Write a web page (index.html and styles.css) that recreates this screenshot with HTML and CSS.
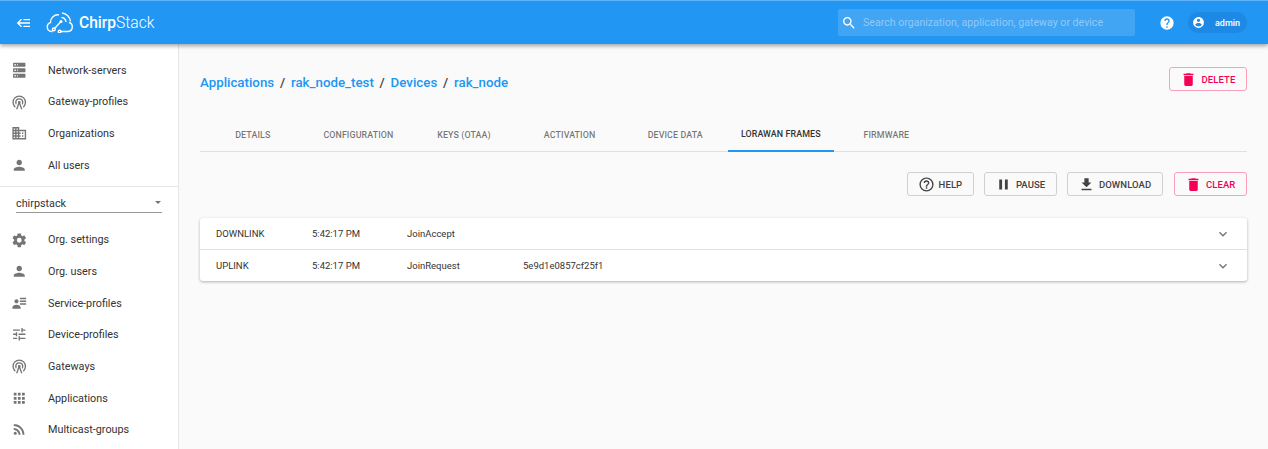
FILE: index.html
```html
<!DOCTYPE html>
<html lang="en">
<head>
  <meta charset="UTF-8">
  <meta name="viewport" content="width=device-width, initial-scale=1.0">
  <title>ChirpStack</title>
  <link rel="stylesheet" href="styles.css">
</head>
<body>
  <header class="topbar">
    <svg class="menu-icon" viewBox="0 0 24 24"><path d="M5,13L9,17L7.6,18.42L1.18,12L7.6,5.58L9,7L5,11H21V13H5M21,6V8H11V6H21M21,16V18H11V16H21Z"/></svg>
    <div class="logo">
      <svg class="logo-mark" viewBox="0 0 28 22">
        <path class="logo-line" d="M6.5 20.5H5.5A4.5 4.5 0 0 1 4.5 11.7A7.5 7.5 0 0 1 13 3.8"/>
        <path class="logo-line" d="M23 11.5a4.6 4.6 0 0 1-1 9H15"/>
        <path class="logo-line" d="M8.5 17.5L14.5 11"/>
        <circle class="logo-line" cx="7.8" cy="18.4" r="1.4"/>
        <circle class="logo-line" cx="13.6" cy="20.5" r="1.3"/>
        <circle cx="15" cy="10.5" r="1.5" fill="#fff"/>
        <path class="logo-line" d="M15.5 6.5a5 5 0 0 1 4.5 4.5M16 2a9.5 9.5 0 0 1 8.5 8.5"/>
      </svg>
      <span class="logo-text"><b>Chirp</b>Stack</span>
    </div>
    <div class="search">
      <svg class="search-icon" viewBox="0 0 24 24"><path d="M15.5 14h-.79l-.28-.27C15.41 12.59 16 11.11 16 9.5 16 5.91 13.09 3 9.5 3S3 5.91 3 9.5 5.91 16 9.5 16c1.61 0 3.09-.59 4.23-1.57l.27.28v.79l5 4.99L20.49 19l-4.99-5zm-6 0C7.01 14 5 11.99 5 9.5S7.01 5 9.5 5 14 7.01 14 9.5 11.99 14 9.5 14z"/></svg>
      <span>Search organization, application, gateway or device</span>
    </div>
    <svg class="top-help" viewBox="0 0 24 24"><path d="M15.07,11.25L14.17,12.17C13.45,12.89 13,13.5 13,15H11V14.5C11,13.39 11.45,12.39 12.17,11.67L13.41,10.41C13.78,10.05 14,9.55 14,9C14,7.89 13.1,7 12,7A2,2 0 0,0 10,9H8A4,4 0 0,1 12,5A4,4 0 0,1 16,9C16,9.88 15.64,10.67 15.07,11.25M13,19H11V17H13M12,2A10,10 0 0,0 2,12A10,10 0 0,0 12,22A10,10 0 0,0 22,12C22,6.47 17.5,2 12,2Z"/></svg>
    <div class="user-pill">
      <svg viewBox="0 0 24 24"><path d="M12,19.2C9.5,19.2 7.29,17.92 6,16C6.03,14 10,12.9 12,12.9C14,12.9 17.97,14 18,16C16.71,17.92 14.5,19.2 12,19.2M12,5A3,3 0 0,1 15,8A3,3 0 0,1 12,11A3,3 0 0,1 9,8A3,3 0 0,1 12,5M12,2A10,10 0 0,0 2,12A10,10 0 0,0 12,22A10,10 0 0,0 22,12C22,6.47 17.5,2 12,2Z"/></svg>
      <span>admin</span>
    </div>
  </header>

  <div class="layout">
    <nav class="sidebar">
      <ul class="nav-list">
        <li><svg viewBox="0 0 24 24"><path d="M4,1H20A1,1 0 0,1 21,2V6A1,1 0 0,1 20,7H4A1,1 0 0,1 3,6V2A1,1 0 0,1 4,1M4,9H20A1,1 0 0,1 21,10V14A1,1 0 0,1 20,15H4A1,1 0 0,1 3,14V10A1,1 0 0,1 4,9M4,17H20A1,1 0 0,1 21,18V22A1,1 0 0,1 20,23H4A1,1 0 0,1 3,22V18A1,1 0 0,1 4,17M9,5H10V3H9V5M9,13H10V11H9V13M9,21H10V19H9V21M5,3V5H7V3H5M5,11V13H7V11H5M5,19V21H7V19H5Z"/></svg>Network-servers</li>
        <li><svg viewBox="0 0 24 24"><path d="M12,10A2,2 0 0,1 14,12C14,12.5 13.82,12.94 13.53,13.29L16.7,22H14.57L12,14.93L9.43,22H7.3L10.47,13.29C10.18,12.94 10,12.5 10,12A2,2 0 0,1 12,10M12,8A4,4 0 0,0 8,12C8,12.5 8.1,13 8.28,13.46L7.4,15.86C6.53,14.81 6,13.47 6,12A6,6 0 0,1 12,6A6,6 0 0,1 18,12C18,13.47 17.47,14.81 16.6,15.86L15.72,13.46C15.9,13 16,12.5 16,12A4,4 0 0,0 12,8M12,4A8,8 0 0,0 4,12C4,14.36 5,16.5 6.64,17.94L5.92,19.94C3.54,18.11 2,15.23 2,12A10,10 0 0,1 12,2A10,10 0 0,1 22,12C22,15.23 20.46,18.11 18.08,19.94L17.36,17.94C19,16.5 20,14.36 20,12A8,8 0 0,0 12,4Z"/></svg>Gateway-profiles</li>
        <li><svg viewBox="0 0 24 24"><path d="M12 7V3H2v18h20V7H12zM6 19H4v-2h2v2zm0-4H4v-2h2v2zm0-4H4V9h2v2zm0-4H4V5h2v2zm4 12H8v-2h2v2zm0-4H8v-2h2v2zm0-4H8V9h2v2zm0-4H8V5h2v2zm10 12h-8v-2h2v-2h-2v-2h2v-2h-2V9h8v10zm-2-8h-2v2h2v-2zm0 4h-2v2h2v-2z"/></svg>Organizations</li>
        <li><svg viewBox="0 0 24 24"><path d="M12 12c2.21 0 4-1.79 4-4s-1.79-4-4-4-4 1.79-4 4 1.79 4 4 4zm0 2c-2.67 0-8 1.34-8 4v2h16v-2c0-2.66-5.33-4-8-4z"/></svg>All users</li>
      </ul>
      <div class="org-select">
        <span>chirpstack</span>
        <i class="select-arrow"></i>
      </div>
      <ul class="nav-list">
        <li><svg viewBox="0 0 24 24"><path d="M12,15.5A3.5,3.5 0 0,1 8.5,12A3.5,3.5 0 0,1 12,8.5A3.5,3.5 0 0,1 15.5,12A3.5,3.5 0 0,1 12,15.5M19.43,12.97C19.47,12.65 19.5,12.33 19.5,12C19.5,11.67 19.47,11.34 19.43,11L21.54,9.37C21.73,9.22 21.78,8.95 21.66,8.73L19.66,5.27C19.54,5.05 19.27,4.96 19.05,5.05L16.56,6.05C16.04,5.66 15.5,5.32 14.87,5.07L14.5,2.42C14.46,2.18 14.25,2 14,2H10C9.75,2 9.54,2.18 9.5,2.42L9.13,5.07C8.5,5.32 7.96,5.66 7.44,6.05L4.95,5.05C4.73,4.96 4.46,5.05 4.34,5.27L2.34,8.73C2.21,8.95 2.27,9.22 2.46,9.37L4.57,11C4.53,11.34 4.5,11.67 4.5,12C4.5,12.33 4.53,12.65 4.57,12.97L2.46,14.63C2.27,14.78 2.21,15.05 2.34,15.27L4.34,18.73C4.46,18.95 4.73,19.03 4.95,18.95L7.44,17.94C7.96,18.34 8.5,18.68 9.13,18.93L9.5,21.58C9.54,21.82 9.75,22 10,22H14C14.25,22 14.46,21.82 14.5,21.58L14.87,18.93C15.5,18.67 16.04,18.34 16.56,17.94L19.05,18.95C19.27,19.03 19.54,18.95 19.66,18.73L21.66,15.27C21.78,15.05 21.73,14.78 21.54,14.63L19.43,12.97Z"/></svg>Org. settings</li>
        <li><svg viewBox="0 0 24 24"><path d="M12 12c2.21 0 4-1.79 4-4s-1.79-4-4-4-4 1.79-4 4 1.79 4 4 4zm0 2c-2.67 0-8 1.34-8 4v2h16v-2c0-2.66-5.33-4-8-4z"/></svg>Org. users</li>
        <li><svg viewBox="0 0 24 24"><path d="M11,9C11,10.66 9.66,12 8,12C6.34,12 5,10.66 5,9C5,7.34 6.34,6 8,6C9.66,6 11,7.34 11,9M14,20H2V18C2,15.79 4.69,14 8,14C11.31,14 14,15.79 14,18M22,12V14H13V12M22,8V10H13V8M22,4V6H13V4Z"/></svg>Service-profiles</li>
        <li><svg viewBox="0 0 24 24"><path d="M3 17v2h6v-2H3zM3 5v2h10V5H3zm10 16v-2h8v-2h-8v-2h-2v6h2zM7 9v2H3v2h4v2h2V9H7zm14 4v-2H11v2h10zm-6-4h2V7h4V5h-4V3h-2v6z"/></svg>Device-profiles</li>
        <li><svg viewBox="0 0 24 24"><path d="M12,10A2,2 0 0,1 14,12C14,12.5 13.82,12.94 13.53,13.29L16.7,22H14.57L12,14.93L9.43,22H7.3L10.47,13.29C10.18,12.94 10,12.5 10,12A2,2 0 0,1 12,10M12,8A4,4 0 0,0 8,12C8,12.5 8.1,13 8.28,13.46L7.4,15.86C6.53,14.81 6,13.47 6,12A6,6 0 0,1 12,6A6,6 0 0,1 18,12C18,13.47 17.47,14.81 16.6,15.86L15.72,13.46C15.9,13 16,12.5 16,12A4,4 0 0,0 12,8M12,4A8,8 0 0,0 4,12C4,14.36 5,16.5 6.64,17.94L5.92,19.94C3.54,18.11 2,15.23 2,12A10,10 0 0,1 12,2A10,10 0 0,1 22,12C22,15.23 20.46,18.11 18.08,19.94L17.36,17.94C19,16.5 20,14.36 20,12A8,8 0 0,0 12,4Z"/></svg>Gateways</li>
        <li><svg viewBox="0 0 24 24"><path d="M4 8h4V4H4v4zm6 12h4v-4h-4v4zm-6 0h4v-4H4v4zm0-6h4v-4H4v4zm6 0h4v-4h-4v4zm6-10v4h4V4h-4zm-6 4h4V4h-4v4zm6 6h4v-4h-4v4zm0 6h4v-4h-4v4z"/></svg>Applications</li>
        <li><svg viewBox="0 0 24 24"><circle cx="6.18" cy="17.82" r="2.18"/><path d="M4 4.44v2.83c7.03 0 12.73 5.7 12.73 12.73h2.83c0-8.59-6.97-15.56-15.56-15.56zm0 5.66v2.83c3.9 0 7.07 3.17 7.07 7.07h2.83c0-5.47-4.43-9.9-9.9-9.9z"/></svg>Multicast-groups</li>
      </ul>
    </nav>

    <main class="content">
      <div class="title-row">
        <div class="breadcrumb">
          <a>Applications</a><span>/</span><a>rak_node_test</a><span>/</span><a>Devices</a><span>/</span><a>rak_node</a>
        </div>
        <button class="btn btn-danger">
          <svg viewBox="0 0 24 24"><path d="M19,4H15.5L14.5,3H9.5L8.5,4H5V6H19M6,19A2,2 0 0,0 8,21H16A2,2 0 0,0 18,19V7H6V19Z"/></svg>Delete
        </button>
      </div>

      <div class="tabs">
        <div class="tab">Details</div>
        <div class="tab">Configuration</div>
        <div class="tab">Keys (OTAA)</div>
        <div class="tab">Activation</div>
        <div class="tab">Device data</div>
        <div class="tab active">LoRaWAN frames</div>
        <div class="tab">Firmware</div>
      </div>

      <div class="toolbar">
        <button class="btn">
          <svg viewBox="0 0 24 24"><path d="M11,18H13V16H11V18M12,2A10,10 0 0,0 2,12A10,10 0 0,0 12,22A10,10 0 0,0 22,12A10,10 0 0,0 12,2M12,20C7.59,20 4,16.41 4,12C4,7.59 7.59,4 12,4C16.41,4 20,7.59 20,12C20,16.41 16.41,20 12,20M12,6A4,4 0 0,0 8,10H10A2,2 0 0,1 12,8A2,2 0 0,1 14,10C14,12 11,11.75 11,15H13C13,12.75 16,12.5 16,10A4,4 0 0,0 12,6Z"/></svg>Help
        </button>
        <button class="btn">
          <svg viewBox="0 0 24 24"><path d="M14,19H18V5H14M6,19H10V5H6V19Z"/></svg>Pause
        </button>
        <button class="btn">
          <svg viewBox="0 0 24 24"><path d="M5,20H19V18H5M19,9H15V3H9V9H5L12,16L19,9Z"/></svg>Download
        </button>
        <button class="btn btn-danger btn-clear">
          <svg viewBox="0 0 24 24"><path d="M19,4H15.5L14.5,3H9.5L8.5,4H5V6H19M6,19A2,2 0 0,0 8,21H16A2,2 0 0,0 18,19V7H6V19Z"/></svg>Clear
        </button>
      </div>

      <div class="frames">
        <div class="frame-row">
          <span class="col-dir">DOWNLINK</span>
          <span class="col-time">5:42:17 PM</span>
          <span class="col-type">JoinAccept</span>
          <span class="col-eui"></span>
          <svg class="chevron" viewBox="0 0 24 24"><path d="M7.41,8.58L12,13.17L16.59,8.58L18,10L12,16L6,10L7.41,8.58Z"/></svg>
        </div>
        <div class="frame-row">
          <span class="col-dir">UPLINK</span>
          <span class="col-time">5:42:17 PM</span>
          <span class="col-type">JoinRequest</span>
          <span class="col-eui">5e9d1e0857cf25f1</span>
          <svg class="chevron" viewBox="0 0 24 24"><path d="M7.41,8.58L12,13.17L16.59,8.58L18,10L12,16L6,10L7.41,8.58Z"/></svg>
        </div>
      </div>
    </main>
  </div>
</body>
</html>
```

FILE: styles.css
```css
html, body {
  height: 100%;
}
body {
  margin: 0;
  font-family: Roboto, sans-serif;
  background-color: #fafafa;
  color: rgba(0, 0, 0, 0.87);
  display: flex;
  flex-direction: column;
  overflow: hidden;
}
svg {
  fill: currentColor;
  flex: none;
}

/* top bar */
.topbar {
  height: 43px;
  flex: none;
  display: flex;
  align-items: center;
  background-color: #2196f3;
  border-top: 1px solid #5eb3f6;
  color: #fff;
  box-shadow: 0 2px 4px rgba(0, 0, 0, 0.35);
  position: relative;
  z-index: 2;
}
.menu-icon {
  width: 16px;
  height: 16px;
  margin-left: 16px;
}
.logo {
  display: flex;
  align-items: center;
  margin-left: 14px;
}
.logo-mark {
  width: 28px;
  height: 22px;
  margin-top: -2px;
}
.logo-line {
  fill: none;
  stroke: #fff;
  stroke-width: 1.4;
}
.logo-text {
  font-size: 15.6px;
  font-weight: 300;
  margin-left: 5px;
}
.logo-text b {
  font-weight: 500;
}
.search {
  width: 297px;
  height: 27px;
  margin-left: auto;
  display: flex;
  align-items: center;
  background-color: rgba(255, 255, 255, 0.15);
  border-radius: 2px;
  font-size: 10.6px;
  color: rgba(255, 255, 255, 0.42);
}
.search-icon {
  width: 16px;
  height: 16px;
  margin: 0 6px 0 3px;
  color: #fff;
}
.top-help {
  width: 16px;
  height: 16px;
  margin-left: 24px;
}
.user-pill {
  width: 59px;
  height: 21px;
  margin: 0 21px 0 13px;
  display: flex;
  align-items: center;
  background-color: #1e88e5;
  border-radius: 11px;
  font-size: 9px;
  font-weight: 500;
}
.user-pill svg {
  width: 13px;
  height: 13px;
  margin: 0 10px 0 4px;
}

/* sidebar */
.layout {
  flex: 1;
  display: flex;
  min-height: 0;
}
.sidebar {
  width: 178px;
  flex: none;
  background-color: #fff;
  border-right: 1px solid #e6e6e6;
  padding-top: 10.5px;
}
.nav-list {
  list-style: none;
  margin: 0;
  padding: 0;
}
.nav-list li {
  height: 31.67px;
  display: flex;
  align-items: center;
  padding-left: 10.75px;
  font-size: 10.8px;
  color: #333;
}
.nav-list svg {
  width: 16.5px;
  height: 16.5px;
  margin-right: 20.75px;
  color: #757575;
}
.org-select {
  height: 26px;
  margin: 5px 0 2.8px;
  padding: 4px 16px;
  border-top: 1px solid #e6e6e6;
  display: flex;
  align-items: center;
  justify-content: space-between;
  font-size: 10.8px;
  color: #333;
  position: relative;
}
.org-select span {
  line-height: 17px;
  flex: 1;
  border-bottom: 1px solid #999;
}
.select-arrow {
  position: absolute;
  right: 17px;
  top: 14px;
  border: 3.5px solid transparent;
  border-top: 3.5px solid #757575;
}

/* main content */
.content {
  flex: 1;
  min-width: 0;
  padding: 23px 21px 0;
}
.title-row {
  display: flex;
  align-items: center;
  justify-content: space-between;
}
.breadcrumb {
  font-size: 13.3px;
  font-weight: 500;
  color: #2196f3;
  padding-top: 6px;
}
.breadcrumb span {
  color: #424242;
  margin: 0 5.8px;
}
.btn {
  height: 24px;
  display: flex;
  align-items: center;
  background: none;
  border: 1px solid #d0d0d0;
  border-radius: 3px;
  padding: 0 10.6px 0 10px;
  font-family: inherit;
  font-size: 9.5px;
  font-weight: 500;
  letter-spacing: 0.1px;
  text-transform: uppercase;
  color: #424242;
}
.btn svg {
  width: 17px;
  height: 17px;
  margin-right: 4px;
}
.btn-danger {
  border-color: #fb9fbc;
  color: #f50057;
}
.tabs {
  display: flex;
  margin-top: 20px;
  border-bottom: 1px solid #e0e0e0;
}
.tab {
  width: 105.6px;
  height: 40px;
  padding-top: 7px;
  display: flex;
  align-items: center;
  justify-content: center;
  box-sizing: border-box;
  font-size: 8.9px;
  font-weight: 500;
  letter-spacing: 0.1px;
  text-transform: uppercase;
  color: rgba(0, 0, 0, 0.55);
}
.tab.active {
  color: #333;
  border-bottom: 2px solid #2196f3;
  margin-bottom: -1px;
  height: 41px;
}
.toolbar {
  display: flex;
  justify-content: flex-end;
  gap: 10px;
  margin-top: 20px;
}
.btn-clear {
  margin-left: 1px;
}
.frames {
  margin-top: 22px;
  background-color: #fff;
  border-radius: 3px;
  box-shadow: 0 1px 3px rgba(0, 0, 0, 0.3);
}
.frame-row {
  height: 31px;
  display: flex;
  align-items: center;
  padding: 0 16px;
  font-size: 9.5px;
  color: #333;
}
.frame-row + .frame-row {
  border-top: 1px solid #e0e0e0;
}
.col-dir {
  width: 96px;
}
.col-time {
  width: 95px;
}
.col-type {
  width: 116px;
}
.chevron {
  width: 16px;
  height: 16px;
  margin-left: auto;
  color: #757575;
}
```
